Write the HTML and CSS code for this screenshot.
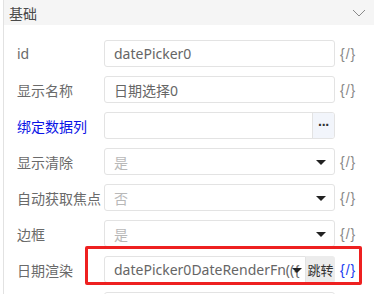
FILE: index.html
```html
<!DOCTYPE html>
<html>
  <head>
    <link rel="stylesheet" href="styles.css">
    <title>属性</title>
  </head>
  <body>
    <div class="panel">
      <div class="section">
        <div class="section-title">
          <label>基础</label>
          <svg class="chevron" width="14" height="8" viewBox="0 0 14 8">
            <path d="M1 1 L7 7 L13 1" fill="none" stroke="#8a8a8a" stroke-width="1"/>
          </svg>
        </div>
        <div class="section-body">
          <div class="prop-row">
            <label class="prop-label">id</label>
            <div class="prop-input"><span>datePicker0</span></div>
            <span class="expr">{/}</span>
          </div>
          <div class="prop-row">
            <label class="prop-label">显示名称</label>
            <div class="prop-input"><span>日期选择0</span></div>
            <span class="expr">{/}</span>
          </div>
          <div class="prop-row">
            <label class="prop-label bind">绑定数据列</label>
            <div class="prop-input with-btn">
              <span></span>
              <button class="dots-btn">&middot;&middot;&middot;</button>
            </div>
          </div>
          <div class="prop-row">
            <label class="prop-label">显示清除</label>
            <div class="prop-input select"><span class="muted">是</span><i class="caret"></i></div>
            <span class="expr">{/}</span>
          </div>
          <div class="prop-row">
            <label class="prop-label">自动获取焦点</label>
            <div class="prop-input select"><span class="muted">否</span><i class="caret"></i></div>
            <span class="expr">{/}</span>
          </div>
          <div class="prop-row">
            <label class="prop-label">边框</label>
            <div class="prop-input select"><span class="muted">是</span><i class="caret"></i></div>
            <span class="expr">{/}</span>
          </div>
          <div class="prop-row highlighted">
            <label class="prop-label">日期渲染</label>
            <div class="prop-input select short"><span class="clip">datePicker0DateRenderFn(({</span><i class="caret"></i></div>
            <button class="jump-btn">跳转</button>
            <span class="expr active">{/}</span>
            <div class="highlight-box"></div>
          </div>
          <div class="prop-row">
            <label class="prop-label">日期格式</label>
            <div class="prop-input select"><span class="muted">yyyy-MM-dd</span><i class="caret"></i></div>
            <span class="expr">{/}</span>
          </div>
          <div class="prop-row">
            <label class="prop-label">占位文字</label>
            <div class="prop-input"><span></span></div>
            <span class="expr">{/}</span>
          </div>
          <div class="prop-row">
            <label class="prop-label">只读</label>
            <div class="prop-input select"><span class="muted">否</span><i class="caret"></i></div>
            <span class="expr">{/}</span>
          </div>
          <div class="prop-row">
            <label class="prop-label">禁用</label>
            <div class="prop-input select"><span class="muted">否</span><i class="caret"></i></div>
            <span class="expr">{/}</span>
          </div>
          <div class="prop-row">
            <label class="prop-label">可见</label>
            <div class="prop-input select"><span class="muted">是</span><i class="caret"></i></div>
            <span class="expr">{/}</span>
          </div>
        </div>
      </div>
      <div class="section">
        <div class="section-title">
          <label>样式</label>
        </div>
        <div class="section-body spacer"></div>
      </div>
    </div>
  </body>
</html>
```

FILE: styles.css
```css
html, body {
  margin: 0;
  padding: 0;
  background: #fff;
}

body {
  font-family: "Noto Sans", "Noto Sans CJK SC", sans-serif;
  font-size: 14px;
  color: #606060;
}

.panel {
  height: 294px;
  overflow-y: scroll;
  padding-left: 3px;
}

.panel::-webkit-scrollbar {
  width: 5px;
}

.panel::-webkit-scrollbar-track {
  background: #f0f0f0;
}

.panel::-webkit-scrollbar-thumb {
  background: #c4c4c4;
}

.section {
  border-left: 1px solid #e2e2e2;
}

.section-title {
  display: flex;
  align-items: center;
  justify-content: space-between;
  height: 25px;
  padding: 0 8px 0 5px;
  background: #f5f5f5;
  color: #4a4a4a;
  font-size: 14px;
}

.chevron {
  margin-top: 1px;
}

.section-body {
  padding: 15px 0 10px 13px;
  display: flex;
  flex-direction: column;
  gap: 9px;
}

.spacer {
  height: 560px;
}

.prop-row {
  position: relative;
  display: flex;
  align-items: center;
  height: 27px;
}

.prop-label {
  width: 87px;
  flex-shrink: 0;
  white-space: nowrap;
  color: #6a6a6a;
}

.prop-label.bind {
  color: #0a14e6;
}

.prop-input {
  box-sizing: border-box;
  width: 231px;
  height: 27px;
  border: 1px solid #e3e3e3;
  border-radius: 3px;
  display: flex;
  align-items: center;
  padding-left: 9px;
  color: #666;
  overflow: hidden;
}

.prop-input span {
  flex: 1;
  white-space: nowrap;
  overflow: hidden;
}

.prop-input .muted {
  color: #b8b8b8;
}

.prop-input.with-btn {
  padding-right: 0;
}

.dots-btn {
  width: 22px;
  height: 100%;
  border: none;
  border-left: 1px solid #e3e3e3;
  background: #f2f5fb;
  color: #333;
  font-size: 14px;
  font-weight: bold;
  letter-spacing: -1px;
  padding: 0 0 2px 0;
  cursor: pointer;
}

.caret {
  width: 0;
  height: 0;
  border-left: 5px solid transparent;
  border-right: 5px solid transparent;
  border-top: 5px solid #222;
  margin: 2px 8px 0 4px;
  flex-shrink: 0;
}

.prop-input.short {
  width: 202px;
  border-radius: 3px 0 0 3px;
}

.prop-input.short .caret {
  margin: 2px 3px 0 -10px;
}

.clip {
  overflow: hidden;
}

.jump-btn {
  height: 27px;
  width: 29px;
  padding: 0;
  border: none;
  background: #ececec;
  color: #333;
  font-family: "Noto Sans CJK SC", sans-serif;
  font-size: 13px;
  border-radius: 0 3px 3px 0;
}

.expr {
  margin-left: 5px;
  color: #888;
  font-family: "Liberation Sans", sans-serif;
  font-size: 14px;
  letter-spacing: 1px;
}

.expr.active {
  color: #1a3cf0;
}

.highlight-box {
  position: absolute;
  left: 68px;
  top: -10px;
  width: 271px;
  height: 33px;
  border: 3px solid #ee2020;
  border-radius: 2px;
  pointer-events: none;
}
```
